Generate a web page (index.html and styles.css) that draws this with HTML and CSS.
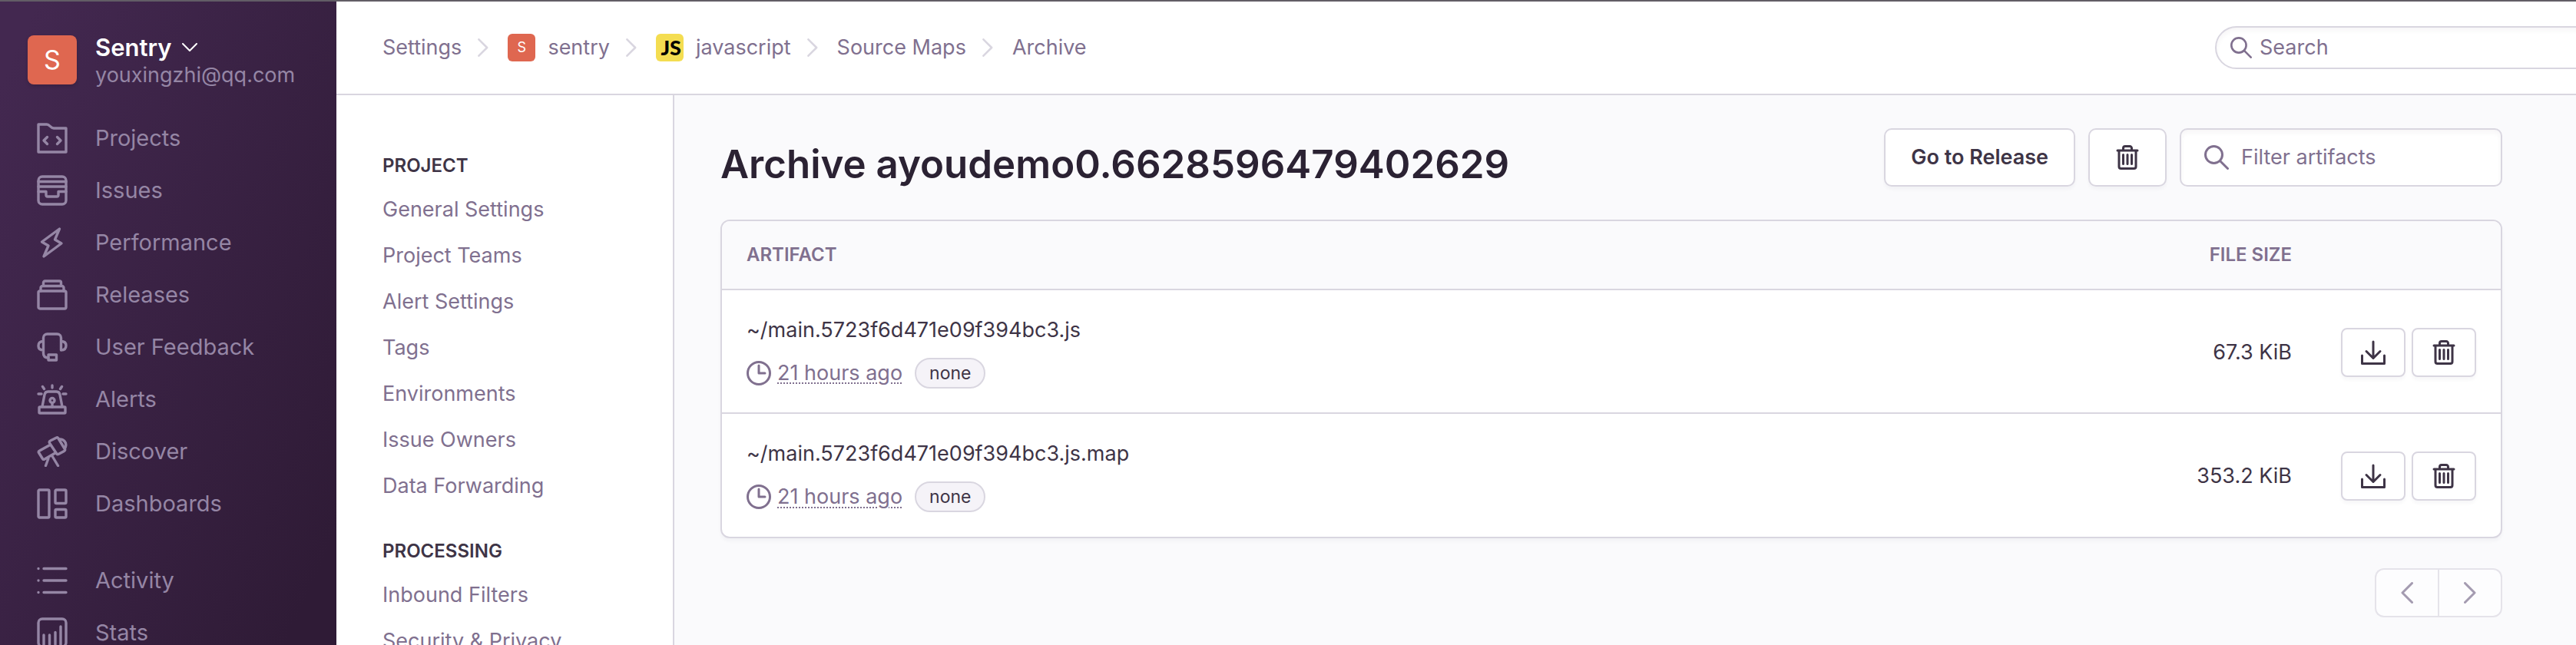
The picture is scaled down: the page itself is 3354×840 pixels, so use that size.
FILE: index.html
```
<!DOCTYPE html>
<html lang="en">
<head>
<meta charset="utf-8">
<title>Archive - Source Maps</title>
<link rel="stylesheet" href="styles.css">
</head>
<body>
<svg class="sprite" aria-hidden="true">
  <symbol id="trash" viewBox="0 0 32 32"><path d="M3 7h26M10.500 6V4a2.500 2.500 0 0 1 2.500-2.500h6A2.500 2.500 0 0 1 21.500 4v2M5 7v21a2.500 2.500 0 0 0 2.500 2.500h17A2.500 2.500 0 0 0 27 28V7M10.500 12.500v12M16 12.500v12M21.500 12.500v12"/></symbol>
  <symbol id="download" viewBox="0 0 32 32"><path d="M16 2v21M7 14.500l9 9 9-9M1.500 20v10.500h29V20"/></symbol>
  <symbol id="search" viewBox="0 0 32 32"><circle cx="12.500" cy="12.500" r="11"/><path d="M20.500 20.500l10 10"/></symbol>
  <symbol id="clock" viewBox="0 0 32 32"><circle cx="16" cy="16" r="14.500"/><path d="M16 6v10h8"/></symbol>
  <symbol id="next" viewBox="0 0 16 28"><path d="M1.500 1.500L14 14 1.500 26.500"/></symbol>
  <symbol id="prev" viewBox="0 0 16 28"><path d="M14.500 1.500L2 14l12.500 12.500"/></symbol>
</svg>
<div class="app">
  <aside class="sidebar">
    <div class="org">
      <span class="avatar avatar-lg">S</span>
      <div class="org-text">
        <button class="org-name" type="button">Sentry
          <svg class="caret" viewBox="0 0 20 12"><path d="M1 1l9 9 9-9"/></svg>
        </button>
        <span class="org-mail">youxingzhi@qq.com</span>
      </div>
    </div>
    <nav class="menu" aria-label="Primary">
      <a class="menu-item" href="#"><svg viewBox="0 0 40 40"><path d="M2 2h11c4 0 4.500 5 9 5h16v31H2zM13.500 18.500L9 23l4.500 4.500M26.500 18.500L31 23l-4.500 4.500"/></svg>Projects</a>
      <a class="menu-item" href="#"><svg viewBox="0 0 40 40"><rect x="2" y="2" width="36" height="36" rx="5"/><path d="M2 8.500h36M2 15h36M2 21.500h10V26a2 2 0 0 0 2 2h12a2 2 0 0 0 2-2v-4.500h10"/></svg>Issues</a>
      <a class="menu-item" href="#"><svg viewBox="0 0 40 40"><path d="M29.500 2L6.500 19l8.500 5-6 14 23-17-8.500-5z"/></svg>Performance</a>
      <a class="menu-item" href="#"><svg viewBox="0 0 40 40"><rect x="2" y="15" width="36" height="23" rx="2"/><path d="M5 15v-4a2.500 2.500 0 0 1 2.500-2.500h25A2.500 2.500 0 0 1 35 11v4M8.500 8V4a2 2 0 0 1 2-2h19a2 2 0 0 1 2 2v4"/></svg>Releases</a>
      <a class="menu-item" href="#"><svg viewBox="0 0 40 40"><path d="M15 34c-4 0-6.500-2-6.500-6V8a5 5 0 0 1 5-5h13a5 5 0 0 1 5 5v16c4.500 0 6.500-2 6.500-6s-2-5.500-6.500-5.500M8.500 12.500C4 12.500 2 14.500 2 18.500S4 24 8.500 24"/><rect x="15" y="30" width="10.500" height="7"/></svg>User Feedback</a>
      <a class="menu-item" href="#"><svg viewBox="0 0 40 40"><rect x="3" y="30" width="34" height="8" rx="1"/><path d="M7 29.500l3-15.500c.5-2.500 2-4 4.500-4h11c2.500 0 4 1.500 4.500 4l3 15.500M20 25v5M20 2v3M7.500 3.500l2 3M32.500 3.500l-2 3M2 13h4M34 13h4"/><circle cx="20" cy="21.500" r="3"/></svg>Alerts</a>
      <a class="menu-item" href="#"><svg viewBox="0 0 40 40"><path d="M17 11.500L3.500 19c-1 .5-1.500 1.500-1 2.500l5 8c.5 1 1.500 1 2.500.5l13-7.500M17.500 6l8-4c1-.5 2 0 2.500 1l8.500 14c.5 1 0 2-1 2.500L28 23.500c-1 .5-2 0-2.500-1L16.500 9c-.5-1-.5-2.500 1-3zM28.500 4C34 3 40 8 37 15M15 29l-3.500 9.500M20 26l7.500 12.500"/></svg>Discover</a>
      <a class="menu-item" href="#"><svg viewBox="0 0 40 40"><rect x="2" y="2" width="14" height="36" rx="1.500"/><rect x="24" y="2" width="14" height="17.500" rx="1.500"/><rect x="24" y="27.500" width="14" height="10.500" rx="1.500"/></svg>Dashboards</a>
    </nav>
    <nav class="menu" aria-label="Secondary">
      <a class="menu-item" href="#"><svg viewBox="0 0 40 40"><path d="M2 4.500h0M9 4.500h29M2 20h0M9 20h29M2 35.500h0M9 35.500h29"/></svg>Activity</a>
      <a class="menu-item" href="#"><svg viewBox="0 0 40 40"><rect x="2" y="2" width="36" height="36" rx="5"/><path d="M9 38V23M16.500 38V23M24 38V19.500M31 38V12"/></svg>Stats</a>
    </nav>
  </aside>
  <div class="main">
    <header class="topbar">
      <nav class="crumbs" aria-label="Breadcrumb">
        <a href="#">Settings</a>
        <svg class="sep"><use href="#next"/></svg>
        <a href="#"><span class="avatar avatar-sm">S</span>sentry</a>
        <svg class="sep"><use href="#next"/></svg>
        <a href="#"><span class="js-logo">JS</span>javascript</a>
        <svg class="sep"><use href="#next"/></svg>
        <a href="#">Source Maps</a>
        <svg class="sep"><use href="#next"/></svg>
        <a href="#">Archive</a>
      </nav>
      <label class="field search">
        <svg class="icon"><use href="#search"/></svg>
        <input type="text" placeholder="Search" aria-label="Search">
      </label>
    </header>
    <div class="body">
      <nav class="settings" aria-label="Project settings">
        <h2>Project</h2>
        <a href="#">General Settings</a>
        <a href="#">Project Teams</a>
        <a href="#">Alert Settings</a>
        <a href="#">Tags</a>
        <a href="#">Environments</a>
        <a href="#">Issue Owners</a>
        <a href="#">Data Forwarding</a>
        <h2>Processing</h2>
        <a href="#">Inbound Filters</a>
        <a href="#">Security &amp; Privacy</a>
      </nav>
      <main class="content">
        <div class="heading">
          <h1>Archive ayoudemo0.6628596479402629</h1>
          <div class="actions">
            <button class="btn btn-lg" type="button">Go to Release</button>
            <button class="btn btn-lg" type="button" aria-label="Remove all artifacts"><svg class="icon"><use href="#trash"/></svg></button>
            <label class="field filter">
              <svg class="icon"><use href="#search"/></svg>
              <input type="text" placeholder="Filter artifacts" aria-label="Filter artifacts">
            </label>
          </div>
        </div>
        <div class="panel">
          <table>
            <thead>
              <tr><th scope="col">Artifact</th><th scope="col" class="size">File Size</th><th class="tools"></th></tr>
            </thead>
            <tbody>
              <tr>
                <td>
                  <div class="file">~/main.5723f6d471e09f394bc3.js</div>
                  <div class="meta"><svg class="icon"><use href="#clock"/></svg><time>21 hours ago</time><span class="tag">none</span></div>
                </td>
                <td class="size">67.3 KiB</td>
                <td class="tools"><div class="tool-row">
                  <button class="btn btn-sm" type="button" aria-label="Download artifact"><svg class="icon"><use href="#download"/></svg></button>
                  <button class="btn btn-sm" type="button" aria-label="Delete artifact"><svg class="icon"><use href="#trash"/></svg></button>
                </div></td>
              </tr>
              <tr>
                <td>
                  <div class="file">~/main.5723f6d471e09f394bc3.js.map</div>
                  <div class="meta"><svg class="icon"><use href="#clock"/></svg><time>21 hours ago</time><span class="tag">none</span></div>
                </td>
                <td class="size">353.2 KiB</td>
                <td class="tools"><div class="tool-row">
                  <button class="btn btn-sm" type="button" aria-label="Download artifact"><svg class="icon"><use href="#download"/></svg></button>
                  <button class="btn btn-sm" type="button" aria-label="Delete artifact"><svg class="icon"><use href="#trash"/></svg></button>
                </div></td>
              </tr>
            </tbody>
          </table>
        </div>
        <div class="pager">
          <button type="button" aria-label="Previous" disabled><svg class="arrow"><use href="#prev"/></svg></button>
          <button type="button" aria-label="Next" disabled><svg class="arrow"><use href="#next"/></svg></button>
        </div>
      </main>
    </div>
  </div>
</div>
</body>
</html>
```
FILE: styles.css
```
:root {
  --border: #d9d6e0;
  --muted: #80708f;
  --text: #3e3446;
  --bg: #fafafc;
}
* { box-sizing: border-box; }
body {
  margin: 0;
  font-family: Inter, "Liberation Sans", sans-serif;
  font-size: 27px;
  line-height: 36px;
  color: var(--text);
  background: var(--bg);
}
a { color: inherit; text-decoration: none; }
button, input { font: inherit; color: inherit; }
h1, h2 { margin: 0; }
svg { display: block; flex: none; fill: none; stroke: currentColor; stroke-width: 3; stroke-linecap: round; stroke-linejoin: round; }
.sprite { position: absolute; width: 0; height: 0; }
.icon { width: 32px; height: 32px; }

.app {
  display: flex;
  height: 100vh;
  overflow: hidden;
  border-top: 2px solid #625d66;
}

.sidebar {
  flex: none;
  width: 438px;
  padding: 44px 36px 0;
  color: #9586a5;
  background: linear-gradient(294deg, #2f1b36 8%, #432850 94%);
}
.org { display: flex; gap: 24px; margin-bottom: 36px; height: 64px; }
.avatar {
  display: flex;
  align-items: center;
  justify-content: center;
  color: #fff;
  background: #df6750;
}
.avatar-lg { width: 64px; height: 64px; border-radius: 8px; font-size: 34px; box-shadow: 0 2px 4px rgba(0, 0, 0, .15); }
.avatar-sm { width: 36px; height: 36px; border-radius: 6px; font-size: 18px; }
.org-text { display: flex; flex-direction: column; }
.org-name {
  display: flex;
  align-items: center;
  gap: 14px;
  padding: 0;
  border: 0;
  background: none;
  color: #fff;
  font-size: 31px;
  font-weight: 600;
  line-height: 32px;
}
.caret { width: 20px; height: 12px; stroke-width: 2; }
.org-mail { line-height: 40px; }
.menu { margin-bottom: 32px; }
.menu-item { display: flex; align-items: center; gap: 36px; height: 68px; padding-left: 12px; font-size: 29px; }
.menu-item svg { width: 40px; height: 40px; stroke-width: 3.4; }

.main { flex: 1; min-width: 0; display: flex; flex-direction: column; }
.topbar {
  display: flex;
  align-items: center;
  justify-content: space-between;
  height: 122px;
  flex: none;
  padding-left: 60px;
  background: #fff;
  border-bottom: 2px solid var(--border);
  overflow: hidden;
}
.crumbs { display: flex; align-items: center; gap: 21px; color: var(--muted); }
.crumbs a { display: flex; align-items: center; gap: 16px; }
.crumbs a:not(:first-child) { padding-left: 4px; }
.sep { width: 14px; height: 24px; color: var(--border); }
.js-logo {
  width: 36px;
  height: 36px;
  padding-right: 3px;
  border-radius: 6px;
  background: #f4dd51;
  color: #000;
  font: 900 27px/36px Lato, sans-serif;
  text-align: right;
}
.field { display: flex; align-items: center; color: var(--muted); background: #fff; border: 2px solid var(--border); box-shadow: inset 0 4px 6px rgba(43, 34, 51, .04); }
.field input { flex: 1; min-width: 0; padding: 0; border: 0; outline: 0; background: none; }
.field input::placeholder { color: var(--muted); opacity: 1; }
.search { width: 540px; height: 56px; margin-right: -70px; padding: 0 18px; gap: 10px; border-radius: 28px; }
.search .icon { width: 28px; height: 28px; }

.body { flex: 1; display: flex; min-height: 0; }
.settings { flex: none; width: 440px; padding: 74px 20px 0 60px; background: #fff; border-right: 2px solid var(--border); color: var(--muted); overflow: hidden; }
.settings h2 { font-size: 24px; line-height: 36px; font-weight: 600; text-transform: uppercase; color: var(--text); margin-bottom: 9px; }
.settings a { display: block; line-height: 60px; }
.settings a + h2 { margin-top: 37px; }

.content { flex: 1; min-width: 0; padding: 43px 96px 0 60px; }
.heading { display: flex; align-items: flex-end; justify-content: space-between; margin-bottom: 43px; }
h1 { font-size: 51px; line-height: 58px; font-weight: 600; color: #2b2233; }
.actions { display: flex; gap: 17px; }
.btn {
  display: flex;
  align-items: center;
  justify-content: center;
  border: 2px solid var(--border);
  background: #fff;
  font-weight: 600;
  box-shadow: 0 4px 4px rgba(43, 34, 51, .03);
}
.btn-lg { height: 76px; padding: 0 33px; border-radius: 10px; }
.btn-sm { width: 84px; height: 64px; padding: 0; border-radius: 8px; }
.filter { width: 420px; padding: 0 30px; gap: 16px; border-radius: 10px; }

.panel { border: 2px solid var(--border); border-radius: 12px; background: #fff; overflow: hidden; box-shadow: 0 4px 4px rgba(43, 34, 51, .03); }
table { width: 100%; border-collapse: collapse; }
th, td { padding: 0 32px; text-align: left; vertical-align: middle; }
th { height: 89px; font-size: 24px; font-weight: 600; text-transform: uppercase; color: var(--muted); background: var(--bg); }
td { height: 161px; padding-top: 2px; border-top: 2px solid var(--border); }
.size { width: 240px; text-align: right; white-space: nowrap; }
.tools { width: 240px; }
.tool-row { display: flex; gap: 8px; }
.file { line-height: 36px; margin-bottom: 18px; }
.meta { display: flex; align-items: center; gap: 8px; color: var(--muted); }
time { text-decoration: underline dotted 2px; text-underline-offset: 4px; }
.tag { margin-left: 8px; padding: 0 17px; border: 2px solid var(--border); border-radius: 20px; background: #f5f3f8; color: var(--text); font-size: 23px; line-height: 36px; }

.pager { display: flex; justify-content: flex-end; margin-top: 39px; }
.pager button { display: flex; align-items: center; justify-content: center; width: 84px; height: 64px; padding: 0; border: 2px solid #e5e3ea; background: #fdfdfe; color: #a49bb0; }
.pager button:first-child { border-right: 0; border-radius: 12px 0 0 12px; width: 82px; }
.pager button:last-child { border-radius: 0 12px 12px 0; }
.arrow { width: 16px; height: 28px; }
```
